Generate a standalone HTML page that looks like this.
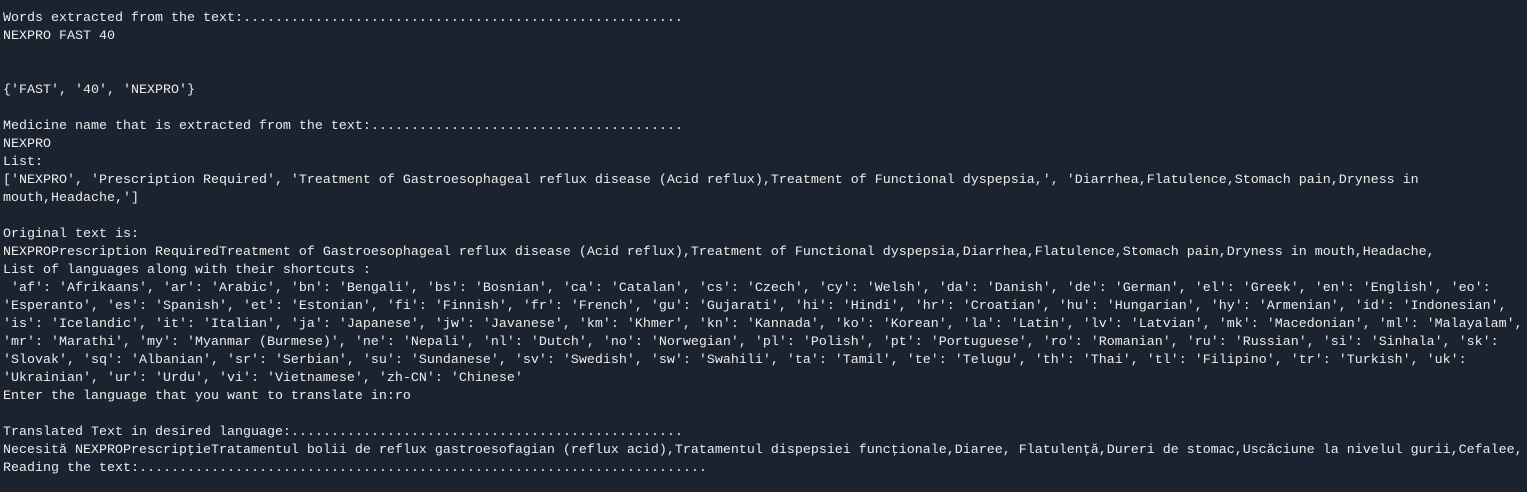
<!DOCTYPE html>
<html><head><meta charset="utf-8"><style>
html,body{margin:0;padding:0;background:#1b2230;width:1527px;height:492px;overflow:hidden}
#t{padding:10px 0 0 3px;color:#ececec;font-family:"Liberation Mono","DejaVu Sans Mono",monospace;font-size:13.33px;}
#t div{height:18px;line-height:18px;white-space:pre}
</style></head><body><div id="t">
<div>Words extracted from the text:.......................................................</div>
<div>NEXPRO FAST 40</div>
<div> </div>
<div> </div>
<div>{'FAST', '40', 'NEXPRO'}</div>
<div> </div>
<div>Medicine name that is extracted from the text:.......................................</div>
<div>NEXPRO</div>
<div>List:</div>
<div>['NEXPRO', 'Prescription Required', 'Treatment of Gastroesophageal reflux disease (Acid reflux),Treatment of Functional dyspepsia,', 'Diarrhea,Flatulence,Stomach pain,Dryness in</div>
<div>mouth,Headache,']</div>
<div> </div>
<div>Original text is:</div>
<div>NEXPROPrescription RequiredTreatment of Gastroesophageal reflux disease (Acid reflux),Treatment of Functional dyspepsia,Diarrhea,Flatulence,Stomach pain,Dryness in mouth,Headache,</div>
<div>List of languages along with their shortcuts :</div>
<div> 'af': 'Afrikaans', 'ar': 'Arabic', 'bn': 'Bengali', 'bs': 'Bosnian', 'ca': 'Catalan', 'cs': 'Czech', 'cy': 'Welsh', 'da': 'Danish', 'de': 'German', 'el': 'Greek', 'en': 'English', 'eo':</div>
<div>'Esperanto', 'es': 'Spanish', 'et': 'Estonian', 'fi': 'Finnish', 'fr': 'French', 'gu': 'Gujarati', 'hi': 'Hindi', 'hr': 'Croatian', 'hu': 'Hungarian', 'hy': 'Armenian', 'id': 'Indonesian',</div>
<div>'is': 'Icelandic', 'it': 'Italian', 'ja': 'Japanese', 'jw': 'Javanese', 'km': 'Khmer', 'kn': 'Kannada', 'ko': 'Korean', 'la': 'Latin', 'lv': 'Latvian', 'mk': 'Macedonian', 'ml': 'Malayalam',</div>
<div>'mr': 'Marathi', 'my': 'Myanmar (Burmese)', 'ne': 'Nepali', 'nl': 'Dutch', 'no': 'Norwegian', 'pl': 'Polish', 'pt': 'Portuguese', 'ro': 'Romanian', 'ru': 'Russian', 'si': 'Sinhala', 'sk':</div>
<div>'Slovak', 'sq': 'Albanian', 'sr': 'Serbian', 'su': 'Sundanese', 'sv': 'Swedish', 'sw': 'Swahili', 'ta': 'Tamil', 'te': 'Telugu', 'th': 'Thai', 'tl': 'Filipino', 'tr': 'Turkish', 'uk':</div>
<div>'Ukrainian', 'ur': 'Urdu', 'vi': 'Vietnamese', 'zh-CN': 'Chinese'</div>
<div>Enter the language that you want to translate in:ro</div>
<div> </div>
<div>Translated Text in desired language:.................................................</div>
<div>Necesită NEXPROPrescripţieTratamentul bolii de reflux gastroesofagian (reflux acid),Tratamentul dispepsiei funcţionale,Diaree, Flatulenţă,Dureri de stomac,Uscăciune la nivelul gurii,Cefalee,</div>
<div>Reading the text:.......................................................................</div>
</div></body></html>
